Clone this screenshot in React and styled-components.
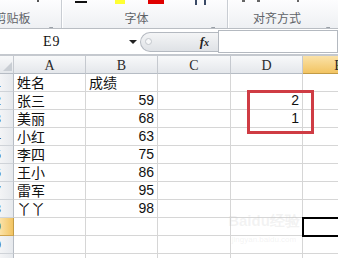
import React from 'react'
import styled, { createGlobalStyle } from 'styled-components'

const GlobalStyle = createGlobalStyle`
  html, body {
    margin: 0;
    padding: 0;
    background: #ffffff;
  }
  body {
    width: 338px;
    height: 258px;
    overflow: hidden;
    font-family: "Noto Sans CJK SC", "Liberation Sans", sans-serif;
  }
  * {
    box-sizing: border-box;
  }
`

const Page = styled.div`
  width: 338px;
  height: 258px;
  overflow: hidden;
  display: flex;
  flex-direction: column;
`

/* ---------- ribbon ---------- */

const Ribbon = styled.div`
  height: 29px;
  flex: 0 0 29px;
  display: flex;
  background: linear-gradient(#fdfdfe, #eef0f3);
  border-bottom: 1px solid #b9bdc3;
  overflow: hidden;
`

const Group = styled.div`
  width: ${props => (props.$width ? props.$width + 'px' : 'auto')};
  flex: ${props => (props.$width ? '0 0 auto' : '1 1 auto')};
  display: flex;
  flex-direction: column;
  padding-right: ${props => props.$padRight}px;
  border-right: ${props => (props.$last ? 'none' : '1px solid #c9cdd3')};
  box-shadow: ${props => (props.$last ? 'none' : '1px 0 0 #ffffff')};
`

const StubRow = styled.div`
  height: 10px;
  display: flex;
  align-items: flex-start;
`

const Stub = styled.span`
  display: block;
  margin-left: ${props => props.$ml}px;
  width: ${props => props.$w}px;
  height: ${props => props.$h}px;
  margin-top: ${props => props.$mt || 0}px;
  background: ${props => props.$color};
`

const LabelRow = styled.div`
  flex: 1;
  display: flex;
  align-items: center;
  padding-bottom: 2px;
`

const GroupLabel = styled.span`
  flex: 1;
  margin-left: ${props => props.$shift || 0}px;
  text-align: center;
  white-space: nowrap;
  font-size: 12px;
  line-height: 14px;
  color: #5f6368;
`

const LauncherBox = styled.span`
  width: 7px;
  height: 7px;
  display: block;
  margin-top: 1px;
`

const Launcher = () => (
  <LauncherBox>
    <svg width="7" height="7" viewBox="0 0 7 7">
      <path d="M0.5 4 V0.5 H4" stroke="#9aa0a7" strokeWidth="1" fill="none" />
      <path d="M2 2 L6 6 M6 3.5 V6 H3.5" stroke="#7d838b" strokeWidth="1" fill="none" />
    </svg>
  </LauncherBox>
)

/* ---------- formula bar ---------- */

const FormulaBar = styled.div`
  height: 26px;
  flex: 0 0 26px;
  display: flex;
  align-items: center;
  background: #ffffff;
  border-bottom: 1px solid #c4c8ce;
`

const NameBox = styled.div`
  width: 140px;
  height: 100%;
  display: flex;
  align-items: center;
  padding-left: 43px;
  padding-right: 3px;
  font-family: "Liberation Serif", "DejaVu Serif", serif;
  font-size: 14px;
  letter-spacing: 1px;
  color: #111111;
`

const Caret = styled.span`
  margin-left: auto;
  width: 0;
  height: 0;
  border-left: 4px solid transparent;
  border-right: 4px solid transparent;
  border-top: 4px solid #222222;
`

const Splitter = styled.div`
  width: 78px;
  height: 20px;
  display: flex;
  align-items: center;
  padding-left: 4px;
  padding-right: 9px;
  border: 1px solid #b4b9c0;
  border-right: none;
  border-radius: 10px 0 0 10px;
  background: linear-gradient(#f4f5f6, #dfe2e6);
`

const Knob = styled.span`
  width: 7px;
  height: 7px;
  border-radius: 50%;
  border: 1px solid #c3c7cc;
  background: #f7f8f9;
`

const Fx = styled.span`
  margin-left: auto;
  font-family: "Liberation Serif", "DejaVu Serif", serif;
  font-style: italic;
  font-weight: bold;
  font-size: 13px;
  color: #222222;
  small {
    font-size: 10px;
  }
`

const FormulaInput = styled.div`
  flex: 1;
  height: 23px;
  border: 1px solid #b4b9c0;
  background: #ffffff;
`

/* ---------- sheet ---------- */

const Sheet = styled.div`
  position: relative;
  flex: 1;
  overflow: hidden;
`

const Grid = styled.div`
  width: 375px;
  display: grid;
  grid-template-columns: 14px 72px 72px 73px 72px 72px;
  grid-template-rows: 19px;
  grid-auto-rows: 18px;
`

const ColHeader = styled.div`
  display: flex;
  align-items: center;
  justify-content: center;
  padding-top: 2px;
  font-family: "Liberation Serif", "DejaVu Serif", serif;
  font-size: 14px;
  color: #2b2b2b;
  border-right: 1px solid ${props => (props.$active ? '#d0a550' : '#c5c9cf')};
  border-bottom: 1px solid ${props => (props.$active ? '#c29b46' : '#b6bcc4')};
  border-top: 1px solid #c5c9cf;
  background: ${props =>
    props.$active
      ? 'linear-gradient(#fbe2a8, #f2c462)'
      : 'linear-gradient(#f8f9fa, #e4e7eb)'};
  overflow: hidden;
  white-space: nowrap;
`

const Corner = styled(ColHeader)`
  align-items: flex-end;
  justify-content: flex-end;
  padding: 0 1px 2px 0;
`

const RowHeader = styled.div`
  display: flex;
  align-items: flex-end;
  justify-content: flex-end;
  padding-right: 12px;
  padding-bottom: 1px;
  overflow: hidden;
  font-family: "Liberation Sans", sans-serif;
  font-size: 13px;
  color: #2b2b2b;
  border-right: 1px solid ${props => (props.$active ? '#c29b46' : '#b6bcc4')};
  border-bottom: 1px solid ${props => (props.$active ? '#d0a550' : '#cfd3d8')};
  background: ${props =>
    props.$active
      ? 'linear-gradient(90deg, #fbe2a8, #f2c462)'
      : 'linear-gradient(90deg, #f3f4f6, #e6e9ed)'};
`

const Cell = styled.div`
  display: flex;
  align-items: flex-end;
  justify-content: ${props => (props.$num ? 'flex-end' : 'flex-start')};
  padding: 0 3px 0 3px;
  border-right: 1px solid #d6d6d6;
  border-bottom: 1px solid #d6d6d6;
  font-family: ${props =>
    props.$num
      ? '"Liberation Sans", Arial, sans-serif'
      : '"Noto Sans CJK SC", sans-serif'};
  font-size: 14px;
  line-height: 17px;
  color: #111111;
  white-space: nowrap;
  overflow: hidden;
`

const RedFrame = styled.div`
  position: absolute;
  left: 247px;
  top: 35px;
  width: 67px;
  height: 44px;
  border: 3px solid #cf3c44;
  pointer-events: none;
`

const Selection = styled.div`
  position: absolute;
  left: 302px;
  top: 162px;
  width: 44px;
  height: 20px;
  border: 2px solid #000000;
`

const Watermark = styled.div`
  position: absolute;
  left: 220px;
  top: 158px;
  width: 88px;
  display: flex;
  flex-direction: column;
  align-items: center;
  color: rgba(200, 200, 200, 0.22);
  font-family: "Liberation Sans", sans-serif;
  pointer-events: none;
  b {
    font-size: 15px;
    line-height: 16px;
  }
  span {
    margin-top: 6px;
    font-size: 8px;
    line-height: 9px;
  }
`

const columns = ['A', 'B', 'C', 'D', 'E']

const rows = [
  ['姓名', '成绩', '', ''],
  ['张三', 59, '', 2],
  ['美丽', 68, '', 1],
  ['小红', 63],
  ['李四', 75],
  ['王小', 86],
  ['雷军', 95],
  ['丫丫', 98],
  [],
  [],
  [],
]

const renderValue = (value, key) => (
  <Cell key={key} $num={typeof value === 'number'}>
    {value}
  </Cell>
)

export default function App() {
  return (
    <Page>
      <GlobalStyle />
      <Ribbon>
        <Group $width={62} $padRight={5}>
          <StubRow>
            <Stub $ml={37} $w={2} $h={2} $color="#555" />
          </StubRow>
          <LabelRow>
            <GroupLabel $shift={-24}>剪贴板</GroupLabel>
            <Launcher />
          </LabelRow>
        </Group>
        <Group $width={166} $padRight={9}>
          <StubRow>
            <Stub $ml={13} $w={12} $h={2} $mt={1} $color="#111" />
            <Stub $ml={28} $w={10} $h={4} $color="#ffff33" />
            <Stub $ml={23} $w={16} $h={4} $color="#e00000" />
            <Stub $ml={31} $w={2} $h={5} $color="#3a4a66" />
            <Stub $ml={7} $w={2} $h={5} $color="#3a4a66" />
          </StubRow>
          <LabelRow>
            <GroupLabel>字体</GroupLabel>
            <Launcher />
          </LabelRow>
        </Group>
        <Group $last $padRight={5}>
          <StubRow>
            <Stub $ml={14} $w={3} $h={2} $color="#666" />
            <Stub $ml={12} $w={3} $h={2} $color="#666" />
            <Stub $ml={37} $w={2} $h={2} $color="#666" />
          </StubRow>
          <LabelRow>
            <GroupLabel>对齐方式</GroupLabel>
            <Launcher />
          </LabelRow>
        </Group>
      </Ribbon>

      <FormulaBar>
        <NameBox>
          E9
          <Caret />
        </NameBox>
        <Splitter>
          <Knob />
          <Fx>
            f<small>x</small>
          </Fx>
        </Splitter>
        <FormulaInput />
      </FormulaBar>

      <Sheet>
        <Grid>
          <Corner>
            <svg width="9" height="9" viewBox="0 0 9 9">
              <path d="M9 0 V9 H0 Z" fill="#c9ced4" />
            </svg>
          </Corner>
          {columns.map(col => (
            <ColHeader key={col} $active={col === 'E'}>
              {col}
            </ColHeader>
          ))}
          {rows.map((row, r) => (
            <React.Fragment key={r}>
              <RowHeader $active={r + 1 === 9}>{r + 1}</RowHeader>
              {[0, 1, 2, 3, 4].map(c => renderValue(row[c], c))}
            </React.Fragment>
          ))}
        </Grid>
        <RedFrame />
        <Selection />
        <Watermark>
          <b>Baidu经验</b>
          <span>jingyan.baidu.com</span>
        </Watermark>
      </Sheet>
    </Page>
  )
}
